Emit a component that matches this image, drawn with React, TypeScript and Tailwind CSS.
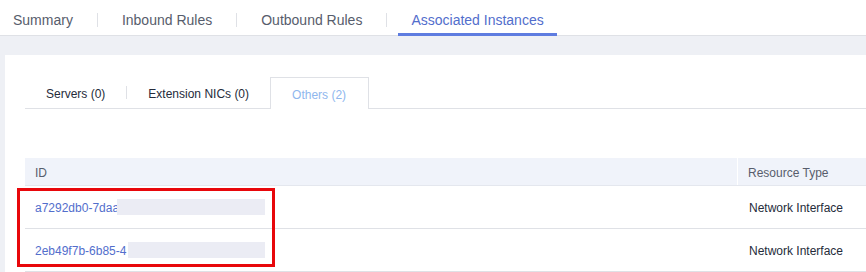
export default function App() {
  const font = { fontFamily: '"Liberation Sans", Arial, sans-serif' };
  const topTabs = ["Summary", "Inbound Rules", "Outbound Rules", "Associated Instances"];
  const rows = [
    { id: "a7292db0-7daa", blurLeft: 92, type: "Network Interface" },
    { id: "2eb49f7b-6b85-4", blurLeft: 103, type: "Network Interface" },
  ];

  return (
    <div className="w-[866px] h-[272px] overflow-hidden bg-[#eef0f5]" style={font}>
      {/* Top tabs */}
      <div className="flex h-[36px] items-stretch bg-white border-b border-[#dfe1e6]">
        {topTabs.map((t, i) => {
          const active = i === topTabs.length - 1;
          return (
            <div key={t} className="flex items-center">
              {i > 0 && <div className="w-px h-[14px] bg-[#dfe1e6] mx-[11px] mt-[4px]" />}
              <div
                className={
                  "relative h-full flex items-center px-[13px] pt-[5px] text-[14px] whitespace-nowrap " +
                  (active ? "text-[#526ecc]" : "text-[#575d6c]")
                }
              >
                {t}
                {active && <div className="absolute left-0 right-0 -bottom-px h-[3px] bg-[#5e7ce0]" />}
              </div>
            </div>
          );
        })}
      </div>

      {/* Content panel */}
      <div className="pl-[5px] pt-[19px]">
        <div className="bg-white pl-[20px] pt-[22px] h-[220px]">
          {/* Secondary tabs */}
          <div className="flex h-[32px] border-b border-[#dfe1e6] text-[12px] whitespace-nowrap">
            <div className="flex items-center px-[21px] pt-[2px] text-[#252b3a]">Servers (0)</div>
            <div className="w-px h-[13px] bg-[#dfe1e6] self-center" />
            <div className="flex items-center px-[21px] pt-[2px] text-[#252b3a]">Extension NICs (0)</div>
            <div className="flex items-center pl-[21px] pt-[2px] text-[#8fb7ee] border border-b-0 border-[#dfe1e6] bg-white -mb-px w-[99px]">
              Others (2)
            </div>
          </div>

          {/* Table */}
          <div className="relative mt-[49px] text-[12px]">
            <div className="flex h-[28px] bg-[#f0f3fa] border-b border-[#e4e7ee] text-[#575d6c]">
              <div className="w-[713px] flex items-center pl-[10px] pt-[2px] border-r border-white">ID</div>
              <div className="flex items-center pl-[10px] pt-[2px]">Resource Type</div>
            </div>
            {rows.map((r) => (
              <div key={r.id} className="flex h-[43px] border-b border-[#dfe1e6]">
                <div className="relative w-[713px] flex items-center pl-[10px] pt-[2px] text-[#526ecc]">
                  {r.id}
                  <div
                    className="absolute top-[13px] h-[16px] bg-[#ebecf4]"
                    style={{ left: r.blurLeft, width: 240 - r.blurLeft }}
                  />
                </div>
                <div className="flex items-center pl-[11px] pt-[2px] text-[#252b3a]">{r.type}</div>
              </div>
            ))}
            <div className="absolute left-[-8px] top-[30px] w-[258px] h-[79px] border-[3px] border-[#e8070b]" />
          </div>
        </div>
      </div>
    </div>
  );
}
